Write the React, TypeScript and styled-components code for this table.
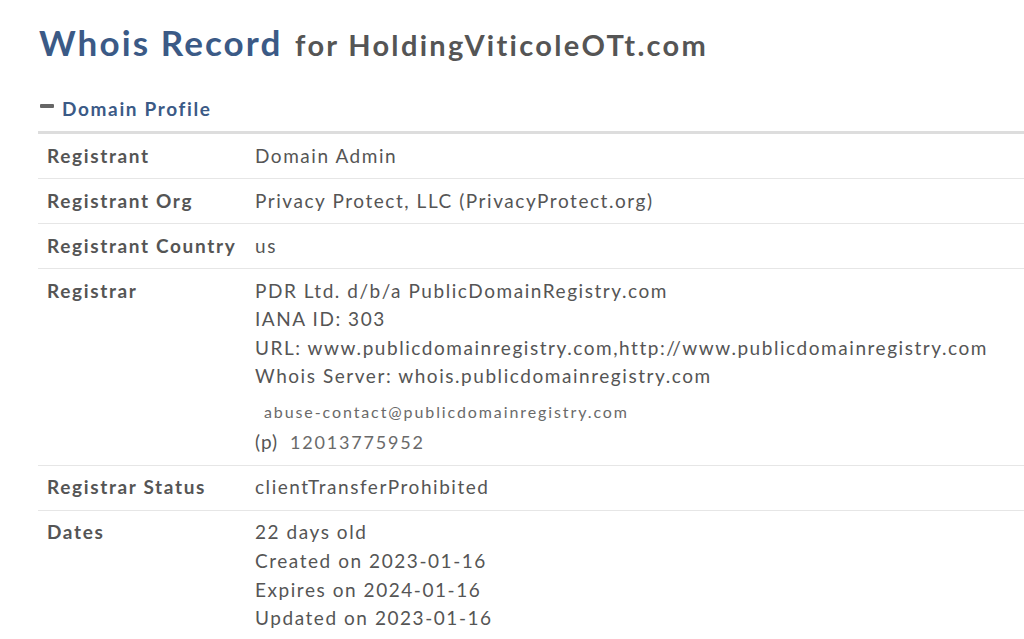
import React from "react";
import styled, { createGlobalStyle } from "styled-components";

const Global = createGlobalStyle`
  html, body { margin: 0; padding: 0; background: #fff; }
  body { font-family: Lato, "Open Sans", sans-serif; color: #555; }
`;

const Page = styled.div`
  padding: 18px 0 0 38px;
`;

const Title = styled.h1`
  margin: 0 0 0 1px;
  font-weight: 700;
  font-size: 35px;
  line-height: 48px;
  color: #3b5a86;
  letter-spacing: 2.1px;
`;

const Sub = styled.span`
  margin-left: 2px;
  font-size: 29px;
  font-weight: 700;
  color: #555;
  letter-spacing: 2.3px;
`;

const SectionHead = styled.div`
  display: flex;
  align-items: center;
  gap: 8px;
  margin-top: 24px;
  height: 30px;
  color: #3b5a86;
  font-weight: 700;
  font-size: 19px;
  letter-spacing: 1.65px;
`;

const Minus = styled.span`
  display: inline-block;
  width: 14px;
  height: 4px;
  background: #666;
  border-radius: 1px;
  margin-left: 2px;
  margin-top: -4px;
`;

const Table = styled.div`
  margin-top: 8px;
  border-top: 3px solid #ddd;
`;

const Row = styled.div`
  display: grid;
  grid-template-columns: 208px 1fr;
  padding: 7.7px 0 7.7px 9px;
  border-bottom: 1px solid #e6e6e6;
  font-size: 19px;
  line-height: 28.6px;
  letter-spacing: 1.55px;
`;

const Label = styled.div`
  font-weight: 700;
  color: #555;
  letter-spacing: 1.65px;
`;

const Value = styled.div`
  color: #555;
`;

const Line = styled.div``;

const Email = styled.div`
  padding-left: 9px;
  margin-top: 6px;
  font-size: 16px;
  line-height: 30px;
  letter-spacing: 1.9px;
  color: #6a6a6a;
`;

const Phone = styled.div`
  display: flex;
  align-items: baseline;
  gap: 12px;
  line-height: 30px;
  letter-spacing: 1px;
`;

const PhoneNum = styled.span`
  font-size: 18px;
  color: #6a6a6a;
  letter-spacing: 1.8px;
`;

const rows: { label: string; lines: string[]; extra?: boolean }[] = [
  { label: "Registrant", lines: ["Domain Admin"] },
  { label: "Registrant Org", lines: ["Privacy Protect, LLC (PrivacyProtect.org)"] },
  { label: "Registrant Country", lines: ["us"] },
  {
    label: "Registrar",
    lines: [
      "PDR Ltd. d/b/a PublicDomainRegistry.com",
      "IANA ID: 303",
      "URL: www.publicdomainregistry.com,http://www.publicdomainregistry.com",
      "Whois Server: whois.publicdomainregistry.com",
    ],
    extra: true,
  },
  { label: "Registrar Status", lines: ["clientTransferProhibited"] },
  {
    label: "Dates",
    lines: ["22 days old", "Created on 2023-01-16", "Expires on 2024-01-16", "Updated on 2023-01-16"],
  },
];

export default function App() {
  return (
    <>
      <Global />
      <Page>
        <Title>
          Whois Record <Sub>for HoldingViticoleOTt.com</Sub>
        </Title>
        <SectionHead>
          <Minus />
          Domain Profile
        </SectionHead>
        <Table>
          {rows.map((r) => (
            <Row key={r.label}>
              <Label>{r.label}</Label>
              <Value>
                {r.lines.map((l) => (
                  <Line key={l}>{l}</Line>
                ))}
                {r.extra && (
                  <>
                    <Email>abuse-contact@publicdomainregistry.com</Email>
                    <Phone>
                      <span>(p)</span>
                      <PhoneNum>12013775952</PhoneNum>
                    </Phone>
                  </>
                )}
              </Value>
            </Row>
          ))}
        </Table>
      </Page>
    </>
  );
}
